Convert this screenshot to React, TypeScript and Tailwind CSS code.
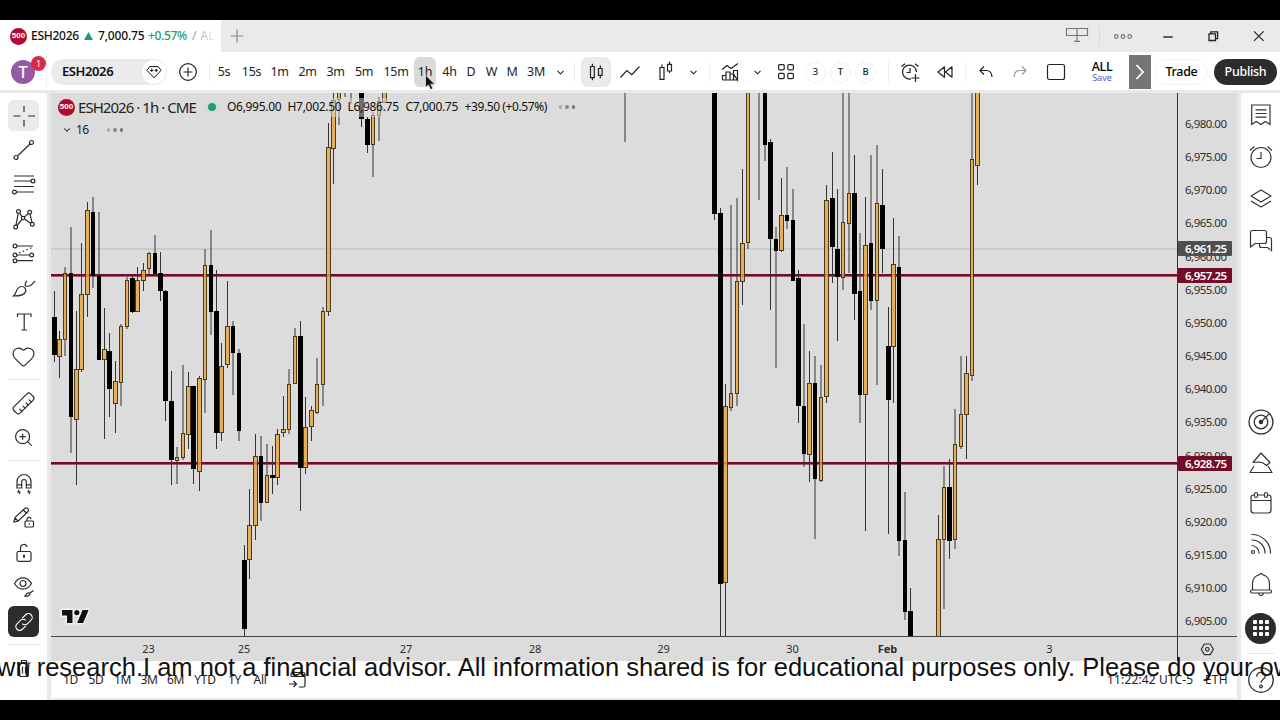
import React from 'react';
import clsx from 'clsx';
import { ChevronDown, Heart, Ruler, ZoomIn } from 'lucide-react';

type Candle = {
  x: number;
  high: number;
  top: number;
  bottom: number;
  low: number;
  up: boolean;
};

const c = (
  x: number,
  high: number,
  top: number,
  bottom: number,
  low: number,
  up = 0
): Candle => ({ x, high, top, bottom, low, up: up === 1 });

const CANDLES: Candle[] = [
  c(54.5, 291, 317, 355, 362),
  c(59.5, 331, 339, 357, 378, 1),
  c(65, 267, 273, 340, 356, 1),
  c(71, 227, 273, 417, 453),
  c(76.5, 311, 369, 420, 485, 1),
  c(81.5, 243, 294, 370, 372, 1),
  c(87.5, 202, 210, 295, 317, 1),
  c(93, 197, 212, 276, 288),
  c(99, 212, 276, 360, 360),
  c(104.5, 308, 349, 360, 439, 1),
  c(109.5, 333, 351, 389, 417),
  c(115.5, 361, 381, 404, 433, 1),
  c(121, 324, 326, 383, 406, 1),
  c(127, 277, 280, 327, 329, 1),
  c(132.5, 276, 278, 312, 313),
  c(137.5, 267, 280, 312, 312, 1),
  c(143.5, 263, 270, 281, 291, 1),
  c(149, 252, 253, 269, 275, 1),
  c(155, 235, 253, 274, 274),
  c(160.5, 252, 273, 291, 301),
  c(165.5, 290, 291, 401, 421),
  c(171.5, 371, 401, 460, 485),
  c(177, 447, 457, 461, 484, 1),
  c(183, 365, 433, 458, 460, 1),
  c(188.5, 372, 386, 435, 449, 1),
  c(193.5, 386, 386, 469, 484),
  c(199.5, 376, 378, 472, 491, 1),
  c(205, 249, 265, 380, 413, 1),
  c(211, 230, 265, 312, 335),
  c(216.5, 270, 311, 433, 449),
  c(221.5, 343, 366, 433, 441, 1),
  c(227.5, 281, 326, 365, 368, 1),
  c(233, 321, 326, 353, 395),
  c(239, 349, 353, 431, 441),
  c(244.5, 545, 560, 629, 636),
  c(249.5, 489, 525, 560, 579, 1),
  c(255.5, 434, 456, 526, 540, 1),
  c(261, 436, 456, 503, 521),
  c(267, 444, 475, 503, 503, 1),
  c(272.5, 446, 475, 478, 494),
  c(277.5, 429, 434, 478, 485, 1),
  c(283.5, 396, 429, 433, 437, 1),
  c(289, 369, 384, 430, 434, 1),
  c(295, 328, 336, 384, 384, 1),
  c(300.5, 321, 336, 468, 511),
  c(305.5, 397, 427, 468, 474, 1),
  c(311.5, 406, 410, 427, 441, 1),
  c(317, 358, 384, 413, 414, 1),
  c(323, 307, 311, 385, 406, 1),
  c(328.5, 123, 147, 312, 316, 1),
  c(333.5, 93, 100, 149, 184, 1),
  c(339, 90, 90, 100, 125, 1),
  c(345, 80, 80, 80, 97),
  c(351, 80, 80, 80, 104),
  c(361.5, 90, 90, 119, 127),
  c(367.5, 117, 119, 145, 153),
  c(373, 112, 115, 145, 177, 1),
  c(379, 97, 101, 116, 141, 1),
  c(384.5, 90, 90, 103, 103, 1),
  c(625, 80, 80, 80, 142),
  c(714.5, 90, 90, 214, 220),
  c(720.5, 208, 213, 584, 640),
  c(725.5, 384, 406, 583, 640, 1),
  c(731, 205, 393, 408, 411, 1),
  c(737, 198, 281, 394, 406, 1),
  c(742.5, 169, 243, 282, 305, 1),
  c(748, 90, 80, 243, 249, 1),
  c(759, 80, 80, 80, 200),
  c(765, 90, 80, 145, 161),
  c(770.5, 139, 142, 239, 310),
  c(776, 227, 239, 251, 368),
  c(781.5, 178, 215, 251, 252, 1),
  c(787, 167, 215, 221, 229),
  c(793, 189, 220, 281, 281),
  c(798.5, 270, 278, 406, 423),
  c(804, 324, 406, 454, 467),
  c(809.5, 351, 383, 455, 482, 1),
  c(815, 356, 383, 479, 539),
  c(821, 365, 397, 481, 482, 1),
  c(826.5, 185, 200, 397, 403, 1),
  c(832.5, 152, 198, 247, 283),
  c(837.5, 189, 249, 277, 341),
  c(843, 80, 222, 278, 290, 1),
  c(849, 80, 193, 224, 273, 1),
  c(854.5, 155, 193, 294, 320),
  c(860, 233, 291, 395, 423),
  c(865.5, 197, 245, 395, 531, 1),
  c(871, 155, 243, 301, 310),
  c(877, 145, 203, 301, 385, 1),
  c(882.5, 169, 205, 249, 273),
  c(888.5, 307, 346, 400, 534),
  c(893.5, 218, 264, 347, 403, 1),
  c(899, 236, 267, 541, 556),
  c(905, 492, 540, 612, 620),
  c(910.5, 588, 611, 640, 640),
  c(938.5, 515, 539, 640, 640, 1),
  c(944, 466, 487, 540, 609, 1),
  c(949.5, 459, 487, 541, 559),
  c(955, 409, 444, 540, 549, 1),
  c(961, 356, 414, 447, 449, 1),
  c(966.5, 356, 373, 415, 459, 1),
  c(972, 80, 159, 376, 381, 1),
  c(977.5, 80, 80, 166, 185, 1),
];

const PRICES = Array.from({ length: 16 }, (_, i) => ({
  label: `6,${980 - i * 5}.00`,
  y: 124 + i * 33.15,
}));

const DATES = [
  { label: '23', x: 148.5 },
  { label: '25', x: 244 },
  { label: '27', x: 406 },
  { label: '28', x: 535 },
  { label: '29', x: 663.5 },
  { label: '30', x: 792.5 },
  { label: 'Feb', x: 887.5, bold: true },
  { label: '3', x: 1049.5 },
];

const PRICE_TAGS = [
  { label: '6,961.25', y: 248.5, fill: '#4f4f4f' },
  { label: '6,957.25', y: 275.5, fill: '#720c27' },
  { label: '6,928.75', y: 463.5, fill: '#720c27' },
];

interface IconProps {
  children: React.ReactNode;
  className?: string;
  size?: number;
}

const Icon: React.FC<IconProps> = ({ children, className, size = 24 }) => (
  <svg
    width={size}
    height={size}
    viewBox="0 0 24 24"
    fill="none"
    stroke="currentColor"
    strokeWidth="1.2"
    className={clsx('shrink-0', className)}
  >
    {children}
  </svg>
);

const Sp500: React.FC<{ className?: string }> = ({ className }) => (
  <span
    className={clsx(
      'flex size-[17px] shrink-0 items-center justify-center rounded-full bg-[#b3092f] font-["Liberation_Sans"] text-[8px] font-bold text-white',
      className
    )}
  >
    500
  </span>
);

const Chart = () => (
  <svg
    width="1186"
    height="568"
    viewBox="51 93 1186 568"
    className="block bg-[#dcdcdc] font-['Noto_Sans',sans-serif]"
  >
    <defs>
      <clipPath id="plot">
        <rect x="51" y="93" width="1126" height="543" />
      </clipPath>
    </defs>
    <g clipPath="url(#plot)">
      <rect x="51" y="248.5" width="1126" height="1" fill="#bcbcbc" />
      <rect x="51" y="274" width="1126" height="2.6" fill="#720c27" />
      <rect x="51" y="462" width="1126" height="2.6" fill="#720c27" />
      {CANDLES.map(({ x, high, top, bottom, low, up }) => {
        const w = x % 1 ? 5 : 4;
        return (
          <g key={x}>
            <rect x={x - 0.5} y={high} width="1" height={Math.max(top - high, 0)} fill="#333" />
            <rect x={x - 0.5} y={bottom} width="1" height={low - bottom} fill="#333" />
            {up ? (
              <rect
                x={x - w / 2 + 0.5}
                y={top + 0.5}
                width={w - 1}
                height={Math.max(bottom - top - 1, 1)}
                fill="#e6a33e"
                fillOpacity="0.82"
                stroke="#4a3a1c"
              />
            ) : (
              <rect x={x - w / 2} y={top} width={w} height={bottom - top} fill="#000" />
            )}
          </g>
        );
      })}
    </g>
    {/* translucent plate behind the legend row */}
    <rect x="56" y="98" width="520" height="19" fill="#dcdcdc" fillOpacity="0.5" />

    <rect x="1177" y="93" width="1" height="568" fill="#333" />
    <rect x="51" y="636" width="1186" height="1" fill="#444" />

    <g fontSize="11.5" fill="#2e2e2e">
      {PRICES.map(({ label, y }) => (
        <text key={label} x="1185" y={y + 4} textLength="42">
          {label}
        </text>
      ))}
      {DATES.map(({ label, x, bold }) => (
        <text
          key={label}
          x={x}
          y="653"
          fontSize="11"
          textAnchor="middle"
          fontWeight={bold ? 700 : 400}
        >
          {label}
        </text>
      ))}
    </g>
    {PRICE_TAGS.map(({ label, y, fill }) => (
      <g key={label}>
        <rect x="1178" y={y - 7.5} width="54" height="15" rx="1" fill={fill} />
        <text
          x="1185"
          y={y + 4}
          fontSize="11.5"
          fontWeight="600"
          fill="#fff"
          textLength="42"
        >
          {label}
        </text>
      </g>
    ))}

    {/* axis settings */}
    <g fill="none" stroke="#333" strokeWidth="1.2">
      <path d="M1204.3 644h6l3 5.3-3 5.3h-6l-3-5.3z" />
      <circle cx="1207.3" cy="649.3" r="1.8" />
    </g>

    {/* TradingView mark */}
    <g fill="#111" stroke="#f4f4f4" strokeWidth="3" paintOrder="stroke" strokeLinejoin="round">
      <path d="M62 610h10.5v13h-5.5v-7.5h-5z" />
      <path d="M82.5 610h6.2l-5.6 13h-6z" />
      <circle cx="76.8" cy="612.6" r="2.6" />
    </g>
  </svg>
);

const TIMEFRAMES = [
  { label: '5s', width: 'w-7' },
  { label: '15s', width: 'w-[27px]' },
  { label: '1m', width: 'w-[29px]' },
  { label: '2m', width: 'w-[27px]' },
  { label: '3m', width: 'w-[29px]' },
  { label: '5m', width: 'w-7' },
  { label: '15m', width: 'w-9' },
  { label: '1h', width: 'w-[22px]', active: true },
  { label: '4h', width: 'w-[27px]' },
  { label: 'D', width: 'w-4' },
  { label: 'W', width: 'w-[25px]' },
  { label: 'M', width: 'w-4' },
  { label: '3M', width: 'w-8' },
];

const Cell: React.FC<{ className: string; children?: React.ReactNode }> = ({
  className,
  children,
}) => (
  <div className={clsx('flex h-[30px] shrink-0 items-center justify-center', className)}>
    {children}
  </div>
);

const Divider = ({ className }: { className: string }) => (
  <Cell className={className}>
    <span className="h-5 w-px bg-[#ececec]" />
  </Cell>
);

const TabBar = () => (
  <div className="flex h-8 items-center bg-[#eaeaea]">
    <div className="flex h-full w-[221px] shrink-0 items-center bg-white pl-2.5 text-[12px] whitespace-nowrap text-[#111]">
      <Sp500 />
      <span className="ml-1 w-[49px] font-medium tracking-[-0.25px]">ESH2026</span>
      <svg width="9" height="8" viewBox="0 0 9 8" className="ml-1 shrink-0 fill-[#1f9d72]">
        <path d="M4.5 0 9 8H0z" />
      </svg>
      <span className="ml-[5px] w-[45px] font-medium tracking-[-0.15px]">7,000.75</span>
      <span className="ml-[5px] w-10 font-medium tracking-[-0.35px] text-[#1f9d72]">
        +0.57%
      </span>
      <span className="ml-1 text-[#999]">/</span>
      <span className="ml-1 bg-linear-to-r from-[#aaa] to-[#eee] bg-clip-text text-transparent">
        AL
      </span>
    </div>
    <Icon className="ml-1 text-[#888]">
      <path d="M12 5.500v13M5.500 12h13" />
    </Icon>
    <div className="ml-auto flex items-center text-[#222]">
      <Icon className="mr-2.5 text-[#777]">
        <path d="M1.500 4.500h21v7h-21zM12 4.500V17M9 17.300h6" />
      </Icon>
      <span className="h-5 w-px bg-[#d8d8d8]" />
      <Icon className="ml-[11px] text-[#777]">
        <circle cx="5.300" cy="12.500" r="1.800" />
        <circle cx="12" cy="12.500" r="1.800" />
        <circle cx="18.700" cy="12.500" r="1.800" />
      </Icon>
      <Icon className="ml-[21px]">
        <path d="M7.300 13h9.400" strokeWidth="1.400" />
      </Icon>
      <Icon className="ml-[21px]">
        <path d="M8 9.800h6.500v6.700H8zM9.800 9.500V7.800h6.800v6.900h-2" strokeWidth="1.300" />
      </Icon>
      <Icon className="mr-[9px] ml-[22px]">
        <path d="m7 7.300 9.600 9.600M16.600 7.300 7 16.900" />
      </Icon>
    </div>
  </div>
);

const Toolbar = () => (
  <div className="flex h-[38px] items-center bg-white pt-0.5 whitespace-nowrap text-[#222]">
    <Cell className="relative w-[46px]">
      <span className="flex size-6 items-center justify-center rounded-full bg-[#955aa3] text-[17px] font-medium text-white">
        T
      </span>
      <span className="absolute -top-[1px] left-[31px] flex size-[15px] items-center justify-center rounded-full bg-[#dc2848] text-[9px] text-white">
        1
      </span>
    </Cell>
    <span className="mr-1 h-8 w-px bg-[#eee]" />
    <div className="flex h-[26px] w-[116px] shrink-0 items-center justify-between rounded-full bg-[#ebebeb] pr-px pl-[11px] text-[13px] font-semibold tracking-[-0.4px] text-[#111]">
      ESH2026
      <span className="flex size-6 items-center justify-center rounded-full bg-white">
        <Icon size={20}>
          <path d="M7 5.5h10l3.5 4.5L12 19 3.500 10z" />
          <path d="M9.300 8v4M7.300 10h4M14.700 8v4M12.700 10h4" />
        </Icon>
      </span>
    </div>
    <Cell className="w-[41px]">
      <Icon>
        <circle cx="12" cy="12" r="8.300" />
        <path d="M12 7.600v8.800M7.600 12h8.800" />
      </Icon>
    </Cell>
    <Divider className="w-[2px]" />
    {TIMEFRAMES.map(({ label, width, active }) => (
      <Cell
        key={label}
        className={clsx(
          width,
          'text-[12.5px] tracking-[-0.3px]',
          active && 'rounded-md bg-[#dadada]'
        )}
      >
        {label}
      </Cell>
    ))}
    <Cell className="w-4">
      <ChevronDown size={11} strokeWidth={2.2} />
    </Cell>
    <Divider className="w-[13px]" />
    <Cell className="w-[30px] rounded-md bg-[#ebebeb]">
      <Icon>
        <path d="M6.500 6.500h3.800v11.200H6.500zM8.400 3.800v2.700M8.400 17.700v2.500M14.500 8.500h3.600v6.800h-3.600zM16.300 5.500v3M16.300 15.300v3" />
      </Icon>
    </Cell>
    <Cell className="w-[38px]">
      <Icon>
        <path d="m2.500 17.500 6.300-7 5 4.200L21.500 6.500" />
      </Icon>
    </Cell>
    <Cell className="w-[34px]">
      <Icon>
        <path d="M6 7.500h4v11.800H6zM8 4.500v3M13.500 4.300h4v6.700h-4zM15.500 1.500v2.800M15.500 11v2" />
      </Icon>
    </Cell>
    <Cell className="w-[21px]">
      <ChevronDown size={11} strokeWidth={2.2} />
    </Cell>
    <Divider className="w-2.5" />
    <Cell className="w-8">
      <Icon>
        <path d="m4 9.500 5-4 4 3 7-5M4.500 20v-4.500h3.500V20M8 15.500V12h4v8M12 14h3.500v6M15.500 14v-3.500h4V20zM4.500 20h15" />
      </Icon>
    </Cell>
    <Cell className="w-[23px]">
      <ChevronDown size={11} strokeWidth={2.2} />
    </Cell>
    <Cell className="w-[34px]">
      <Icon>
        <rect x="4.600" y="4.600" width="5.600" height="5.300" rx="1.200" />
        <rect x="13.800" y="4.600" width="5.600" height="5.300" rx="1.200" />
        <rect x="4.600" y="13.400" width="5.600" height="5.300" rx="1.200" />
        <rect x="13.800" y="13.400" width="5.600" height="5.300" rx="1.200" />
      </Icon>
    </Cell>
    {['3', 'T', 'B'].map((label) => (
      <Cell key={label} className="w-[25px]">
        <span className="flex size-[21px] items-center justify-center rounded-full border border-[#f0f0f0] text-[9.5px] font-medium">
          {label}
        </span>
      </Cell>
    ))}
    <Divider className="w-[21px]" />
    <Cell className="w-[22px]">
      <Icon>
        <path d="M18.500 12A7 7 0 1 0 13 18.900M12 8v4.500H8.500M3.500 6.500 7 3.700M20.500 6.500 17 3.700M17.500 14v8M13.500 18h8" />
      </Icon>
    </Cell>
    <Cell className="ml-1 w-[39px]">
      <Icon>
        <path d="M11.500 6.800v10.400L5 12zM19 6.800v10.400L12.500 12z" strokeLinejoin="round" />
      </Icon>
    </Cell>
    <Divider className="w-[2px]" />
    <Cell className="w-[39px]">
      <Icon>
        <path d="M10 6.500 6 10.500l4 4M6 10.500h6.500q5 0 5.500 6.500" />
      </Icon>
    </Cell>
    <Cell className="w-[30px] text-[#999]">
      <Icon>
        <path d="m14 6.500 4 4-4 4M18 10.500h-6.500q-5 0-5.500 6.500" />
      </Icon>
    </Cell>
    <Cell className="w-[41px]">
      <Icon>
        <rect x="3.500" y="4.500" width="17" height="15" rx="2" />
      </Icon>
    </Cell>
    <Cell className="ml-px w-[50px] flex-col text-[12.5px] leading-[12px]">
      <span className="font-medium tracking-[-0.3px] text-black">ALL</span>
      <span className="text-[9px] leading-[10px] text-[#3f5fc0]">Save</span>
    </Cell>
    <div className="ml-0.5 flex h-[34px] w-[22px] shrink-0 items-center justify-center bg-[#757575] text-white">
      <Icon>
        <path d="m8.500 5 6.500 7-6.500 7" strokeWidth="1.800" />
      </Icon>
    </div>
    <div className="ml-1 flex h-[26px] w-[53px] shrink-0 items-center justify-center rounded-full border border-[#f3f3f3] text-[12.5px] font-medium tracking-[-0.3px] text-black">
      Trade
    </div>
    <div className="ml-[6px] flex h-[26px] w-[63px] shrink-0 items-center justify-center rounded-full bg-[#2c2c2c] text-[12.5px] font-medium tracking-[-0.3px] text-white">
      Publish
    </div>
  </div>
);

interface ToolProps {
  children: React.ReactNode;
  tone?: 'light' | 'dark';
}

const Tool: React.FC<ToolProps> = ({ children, tone }) => (
  <div className="flex h-[34.4px] shrink-0 items-center justify-center">
    <div
      className={clsx(
        'flex size-[31px] items-center justify-center rounded-md',
        tone === 'light' && 'bg-[#ebebeb]',
        tone === 'dark' && 'bg-[#2c2c2c] text-white'
      )}
    >
      {children}
    </div>
  </div>
);

const ToolDivider = () => (
  <div className="flex h-[12.2px] shrink-0 items-center justify-center">
    <span className="h-px w-8 bg-[#e8e8e8]" />
  </div>
);

const DrawingTools = () => (
  <div className="flex w-[47px] shrink-0 flex-col overflow-hidden rounded-tr bg-white pt-[5.5px] text-[#2c2c2c]">
    <Tool tone="light">
      <Icon>
        <path d="M1.500 12H8.500M16 12h7M12 2v6M12 16v6.500" />
      </Icon>
    </Tool>
    <Tool>
      <Icon>
        <circle cx="4" cy="19.500" r="2" />
        <circle cx="19.500" cy="4.500" r="2" />
        <path d="M5.500 18 18 6" />
      </Icon>
    </Tool>
    <Tool>
      <Icon>
        <path d="M2 4h20M2 9h17M2 14.500h20M5 20h17" />
        <circle cx="21" cy="9" r="1.900" />
        <circle cx="2.500" cy="20" r="1.900" />
      </Icon>
    </Tool>
    <Tool>
      <Icon>
        <circle cx="6.500" cy="4.500" r="1.900" />
        <circle cx="17.700" cy="5.300" r="1.900" />
        <circle cx="3.700" cy="20" r="1.900" />
        <circle cx="20.300" cy="17.300" r="1.900" />
        <circle cx="11" cy="11" r="1.700" />
        <path d="M6.200 6.400 4 18M7.500 6.200l2.600 3.400M10 12.400 5 18.500M12.500 10l3.800-3.400M12.400 12l6.300 4.300M18 7.200l2 8.200" />
      </Icon>
    </Tool>
    <Tool>
      <Icon>
        <circle cx="3" cy="5" r="1.900" />
        <circle cx="3" cy="14" r="1.900" />
        <circle cx="19.700" cy="14" r="1.900" />
        <circle cx="3" cy="19.700" r="1.900" />
        <path d="M5 5h16M5 14h12.800M5 19.700h16" />
        <path d="m7 12 13-5.500" strokeDasharray="1.500 2.500" />
      </Icon>
    </Tool>
    <Tool>
      <Icon>
        <path d="M1.500 20c3-2 2.500-9.500 8-9.500 3 0 4.800 2.500 4.200 5-.8 3.300-5 4.500-12.200 4.500zM13.500 10.500c-.8-2.500.3-4.500 1.500-5.500M14 10c4 1 5.500-1 9-5" />
      </Icon>
    </Tool>
    <Tool>
      <Icon>
        <path d="M5.500 7V4h13.500v3M12.200 4v16M9.500 20h5.500" />
      </Icon>
    </Tool>
    <Tool>
      <Heart size={25} strokeWidth={1.15} />
    </Tool>
    <ToolDivider />
    <Tool>
      <Ruler size={25} strokeWidth={1.15} className="rotate-90" />
    </Tool>
    <Tool>
      <ZoomIn size={21} strokeWidth={1.35} />
    </Tool>
    <ToolDivider />
    <Tool>
      <Icon>
        <path d="M5 16V9.500a7 7 0 0 1 14 0V16h-4.700V9.800a2.300 2.300 0 0 0-4.600 0V16zM5 12.800h4.700M14.300 12.800H19M7 18l-1 2h2l-1 2M17 18l-1 2h2l-1 2" />
      </Icon>
    </Tool>
    <Tool>
      <Icon>
        <path d="m2 16 1-4.500L13 2.200q1.500-.8 2.800.5 1.200 1.400.2 2.800L6 15.300zM11.300 4l3.300 3.200M3 12l3 3" />
        <rect x="13" y="15" width="8.500" height="6" rx="1" />
        <path d="M15 15v-1.500a2 2 0 0 1 4-.3M17.300 17.200v1.500" />
      </Icon>
    </Tool>
    <Tool>
      <Icon>
        <rect x="5" y="10.500" width="14" height="9.800" rx="1.500" />
        <path d="M8.500 10.500V7a3.300 3.300 0 0 1 6.500-1" />
        <path d="M12 13.800v3" strokeWidth="2" />
      </Icon>
    </Tool>
    <Tool>
      <Icon>
        <path d="M2.500 8.500Q6 2.800 11 2.800t8.500 5.700Q16 14.200 11 14.200T2.500 8.500z" />
        <circle cx="11" cy="8.500" r="3" />
        <path d="M12.500 21.500c2-1 1.800-4 4.300-3.700 2 .5 1.200 3.700-4.300 3.700zM18 18l3.500-2.500" />
      </Icon>
    </Tool>
    <Tool tone="dark">
      <Icon size={22}>
        <path d="m10 7.800 3.800-3.700a4.100 4.100 0 0 1 5.900 5.900l-3.800 3.700a4.100 4.100 0 0 1-5.900 0M14 16.200l-3.800 3.700A4.100 4.100 0 0 1 4.300 14l3.800-3.700a4.100 4.100 0 0 1 5.900 0" />
      </Icon>
    </Tool>
    <ToolDivider />
    <Tool>
      <Icon>
        <path d="M5.500 7h13M9.500 7V4.500h5V7M7 7l1 13.500h8L17 7M10.500 10.500v7M13.500 10.500v7" />
      </Icon>
    </Tool>
  </div>
);

const RANGES = [
  { label: '1D', width: 'w-[25px]' },
  { label: '5D', width: 'w-[26px]' },
  { label: '1M', width: 'w-[27px]' },
  { label: '3M', width: 'w-[26px]' },
  { label: '6M', width: 'w-[27px]' },
  { label: 'YTD', width: 'w-8' },
  { label: '1Y', width: 'w-[27px]' },
  { label: 'All', width: 'w-6' },
];

const RangeBar = () => (
  <div className="flex h-[37px] items-center bg-white pl-[7px] text-[12px] tracking-[-0.3px] text-[#222]">
    {RANGES.map(({ label, width }) => (
      <span key={label} className={clsx(width, 'text-center')}>
        {label}
      </span>
    ))}
    <Icon className="ml-[14px]">
      <path d="M5 8V6q0-1.500 1.500-1.500h11Q19 4.500 19 6v11.500q0 1.500-1.500 1.500H13M5 8.500h14M8 3v3M16 3v3M3 16h7M7.500 13l3 3-3 3" />
    </Icon>
    <span className="ml-auto w-[88px] tracking-[0.15px] whitespace-nowrap">
      11:22:42 UTC-5
    </span>
    <span className="mr-[8px] ml-[10px] w-6 tracking-[0.2px]">ETH</span>
  </div>
);

const Dots = () => (
  <span className="flex gap-[3px]">
    <span className="size-[3.5px] rounded-full bg-[#aaa]" />
    <span className="size-[3.5px] rounded-full bg-[#888]" />
    <span className="size-[3.5px] rounded-full bg-[#777]" />
  </span>
);

const Legend = () => (
  <div className="absolute top-0 left-0 whitespace-nowrap text-[#222]">
    <div className="flex h-[28px] items-center pl-[7px]">
      <Sp500 />
      <span className="ml-[3px] w-[119px] text-[15px] tracking-[-0.95px]">
        ESH2026 · 1h · CME
      </span>
      <span className="ml-[11px] size-[8px] rounded-full bg-[#1f9d72] shadow-[0_0_0_3px_#cddfd6]" />
      <div className="ml-[11px] flex text-[12px] tracking-[-0.3px] text-[#111]">
        <span className="w-[60.5px]">O6,995.00</span>
        <span className="w-[60px]">H7,002.50</span>
        <span className="w-[58px]">L6,986.75</span>
        <span className="w-[59px]">C7,000.75</span>
        <span className="w-[94px] tracking-[-0.4px]">+39.50 (+0.57%)</span>
      </div>
      <Dots />
    </div>
    <div className="flex h-[18px] items-center pl-[11px] text-[12px]">
      <ChevronDown size={10} strokeWidth={2.5} />
      <span className="mr-[18px] ml-1 tracking-[-0.5px]">16</span>
      <Dots />
    </div>
  </div>
);

const Widgets = () => (
  <div className="flex w-[39px] shrink-0 flex-col items-center rounded-tl bg-white pt-[10px] text-[#333]">
    <div className="flex flex-col gap-[18px]">
      <Icon>
        <path d="M2.700 2h18.300v19.500l-4.600-3-4.500 3-4.600-3-4.600 3zM6.500 6.800h11M6.500 10.500h11M6.500 14.200h11" />
      </Icon>
      <Icon>
        <circle cx="12" cy="12.500" r="10" />
        <path d="M12 7v6.500H7.500M1 5.500 5.500 1.500M23 5.500 18.500 1.500" />
      </Icon>
      <Icon>
        <path d="m2 9 10-6 10 6-10 6zM2 14l10 6 10-6" strokeLinejoin="round" />
      </Icon>
      <Icon>
        <path d="M3 1.500h12.500q2 0 2 2v9q0 2-2 2H6L1.500 18V3.500q0-2 1.500-2zM17.500 8.500h3q2 0 2 2V21.500l-4-3h-6q-2 0-2-2v-2" />
      </Icon>
    </div>
    <div className="mt-[157px] flex flex-col items-center gap-[16.5px]">
      <Icon size={26} className="-my-px">
        <circle cx="12" cy="12" r="11" />
        <circle cx="12" cy="12" r="6.300" />
        <circle cx="12" cy="12" r="1.500" fill="currentColor" />
        <path d="m12 12 7.500-7.500" />
      </Icon>
      <Icon>
        <path d="M4 11.500 12 2l9 9.500-3.500 3-3.500-2.500-4-1zM5 15l-4 6.500h22L19 15" strokeLinejoin="round" />
      </Icon>
      <Icon>
        <path d="M4.500 4h15q2.500 0 2.500 2.500V19q0 3-3 3H5q-3 0-3-3V6.500Q2 4 4.500 4zM2 9.500h20" />
        <rect x="5.500" y="1.500" width="3" height="5" rx="1.500" fill="white" />
        <rect x="15.500" y="1.500" width="3" height="5" rx="1.500" fill="white" />
      </Icon>
      <Icon>
        <circle cx="4" cy="20" r="1.500" />
        <path d="M2.500 13.500a7.500 7.500 0 0 1 7.500 8M2.500 8a13 13 0 0 1 13.500 13.500M2.500 2.500A18.500 18.500 0 0 1 21.500 21.500" />
      </Icon>
      <Icon>
        <path d="M3.500 18V11A8.500 8.500 0 0 1 10 2.800q2-2.300 4 0A8.500 8.500 0 0 1 20.500 11v7M3 18h18q1.500 0 1.500 1.500T21 21H3q-1.500 0-1.500-1.500T3 18zM9.500 21q.5 2.500 2.500 2.500t2.500-2.500" />
      </Icon>
      <div className="flex size-[31px] items-center justify-center rounded-full bg-[#2c2c2c]">
        <div className="grid grid-cols-3 gap-[2px]">
          {Array.from({ length: 9 }, (_, i) => (
            <span key={i} className="size-[4px] rounded-[1px] bg-white" />
          ))}
        </div>
      </div>
    </div>
    <span className="mt-[9px] h-px w-7 bg-[#e8e8e8]" />
    <Icon size={26} className="mt-[13px]">
      <circle cx="12" cy="12" r="11.300" />
      <path d="M8 9q.3-4 4-4t4 3.300c0 3-4 3-4 6.200" />
      <circle cx="12" cy="18" r="1.200" />
    </Icon>
  </div>
);

export default function App() {
  return (
    <div className="relative flex h-[720px] w-[1280px] flex-col overflow-hidden bg-black py-5 font-['Noto_Sans',sans-serif]">
      <TabBar />
      <Toolbar />
      <div className="flex flex-1 justify-between bg-[#e9e9e9] pt-[3px]">
        <DrawingTools />
        <main className="relative w-[1186px]">
          <Chart />
          <Legend />
          <RangeBar />
        </main>
        <Widgets />
      </div>

      {/* scrolling disclaimer */}
      <div className="absolute top-[652px] -left-[3px] font-['Liberation_Sans',Arial,sans-serif] text-[25.5px] leading-[30px] whitespace-nowrap text-[#111]">
        wn research.I am not a financial advisor. All information shared is for
        educational purposes only. Please do your own
      </div>

      {/* pointer */}
      <svg width="13" height="18" viewBox="0 0 13 18" className="absolute top-[74px] left-[424px]">
        <path
          d="M1.500 1v12.500l3-2.500 2 4.500 2.300-1-2-4.300h4z"
          fill="#111"
          stroke="#eee"
          strokeWidth="0.700"
        />
      </svg>
    </div>
  );
}
